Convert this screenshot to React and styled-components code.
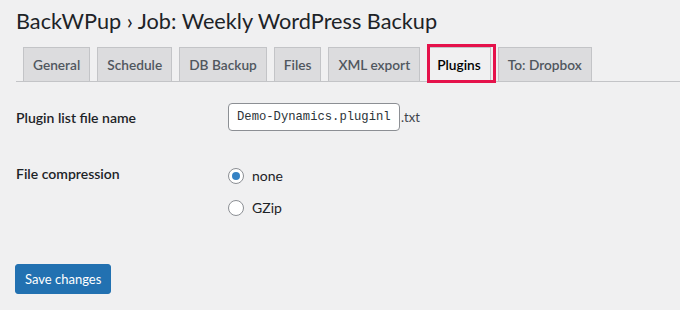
import React, { useState } from 'react'
import styled, { createGlobalStyle } from 'styled-components'

const GlobalStyle = createGlobalStyle`
  body {
    margin: 0;
    background: #f0f0f1;
    color: #1d2327;
    font-family: Lato, "Noto Sans", sans-serif;
    font-size: 14px;
  }
`

// STYLES
const Wrap = styled.div`
  padding: 6px 0 0 16px;
`

const Title = styled.h1`
  margin: 0 0 11px;
  font-size: 21.7px;
  font-weight: 400;
  line-height: 30px;
  color: #1d2327;
`

const TabBar = styled.nav`
  display: flex;
  height: 34px;
  border-bottom: 1px solid #c3c4c7;
`

const Tab = styled.a`
  position: relative;
  margin-left: 7px;
  padding: 5px 9px 0;
  box-sizing: border-box;
  height: 35px;
  border: 1px solid #c3c4c7;
  border-bottom-color: ${p => (p.$active ? '#f0f0f1' : '#c3c4c7')};
  background: ${p => (p.$active ? '#f0f0f1' : '#dcdcde')};
  color: ${p => (p.$active ? '#000' : '#50575e')};
  font-size: 13.7px;
  font-weight: 600;
  line-height: 23px;
  text-decoration: none;
  white-space: nowrap;
  cursor: pointer;

  ${p => p.$highlight && `
    &::after {
      content: '';
      position: absolute;
      top: -4px;
      left: -1px;
      right: -6px;
      bottom: -2px;
      border: 3px solid #e5124b;
    }
  `}
`

const FormTable = styled.div`
  display: grid;
  grid-template-columns: 212px 1fr;
  margin-top: 6px;
`

const Label = styled.div`
  padding-top: ${p => p.$top}px;
  font-weight: 600;
  line-height: 20px;
`

const Field = styled.div`
  display: flex;
  align-items: ${p => (p.$column ? 'flex-start' : 'center')};
  flex-direction: ${p => (p.$column ? 'column' : 'row')};
  gap: ${p => (p.$column ? '12px' : '0')};
  padding: ${p => p.$top}px 0 15px;
`

const TextInput = styled.input`
  width: 172px;
  height: 28px;
  box-sizing: border-box;
  padding: 0 8px;
  border: 1px solid #8c8f94;
  border-radius: 4px;
  background: #fff;
  color: #2c3338;
  font-family: "Liberation Mono", monospace;
  font-size: 12.2px;
  outline: none;
`

const Suffix = styled.span`
  margin-left: 1px;
  font-size: 13px;
  color: #3c434a;
`

const Option = styled.label`
  display: flex;
  align-items: center;
  gap: 8px;
  height: 20px;
  line-height: 20px;
  cursor: pointer;
`

const Radio = styled.input`
  appearance: none;
  margin: 0;
  width: 16px;
  height: 16px;
  border: 1px solid #8c8f94;
  border-radius: 50%;
  background: #fff;
  display: grid;
  place-items: center;

  &:checked::before {
    content: '';
    width: 8px;
    height: 8px;
    border-radius: 50%;
    background: #3582c4;
  }
`

const Submit = styled.div`
  padding-top: 31px;
`

const Button = styled.button`
  height: 30px;
  margin-left: -1px;
  padding: 0 9px;
  border: 1px solid #2271b1;
  border-radius: 3px;
  background: #2271b1;
  color: #fff;
  font-family: Lato, sans-serif;
  font-size: 13px;
  line-height: 28px;
  cursor: pointer;
`

const tabs = ['General', 'Schedule', 'DB Backup', 'Files', 'XML export', 'Plugins', 'To: Dropbox']

function App() {
  const [compression, setCompression] = useState('none')

  return (
    <Wrap>
      <GlobalStyle />
      <Title>BackWPup › Job: Weekly WordPress Backup</Title>
      <TabBar>
        {tabs.map(t => (
          <Tab key={t} $active={t === 'Plugins'} $highlight={t === 'Plugins'}>
            {t}
          </Tab>
        ))}
      </TabBar>

      <FormTable>
        <Label $top={20}>Plugin list file name</Label>
        <Field $top={15}>
          <TextInput defaultValue="Demo-Dynamics.pluginlist" />
          <Suffix>.txt</Suffix>
        </Field>

        <Label $top={18}>File compression</Label>
        <Field $top={20} $column>
          {['none', 'GZip'].map(v => (
            <Option key={v}>
              <Radio
                type="radio"
                name="compression"
                checked={compression === v}
                onChange={() => setCompression(v)}
              />
              {v}
            </Option>
          ))}
        </Field>
      </FormTable>

      <Submit>
        <Button>Save changes</Button>
      </Submit>
    </Wrap>
  )
}

export default App
